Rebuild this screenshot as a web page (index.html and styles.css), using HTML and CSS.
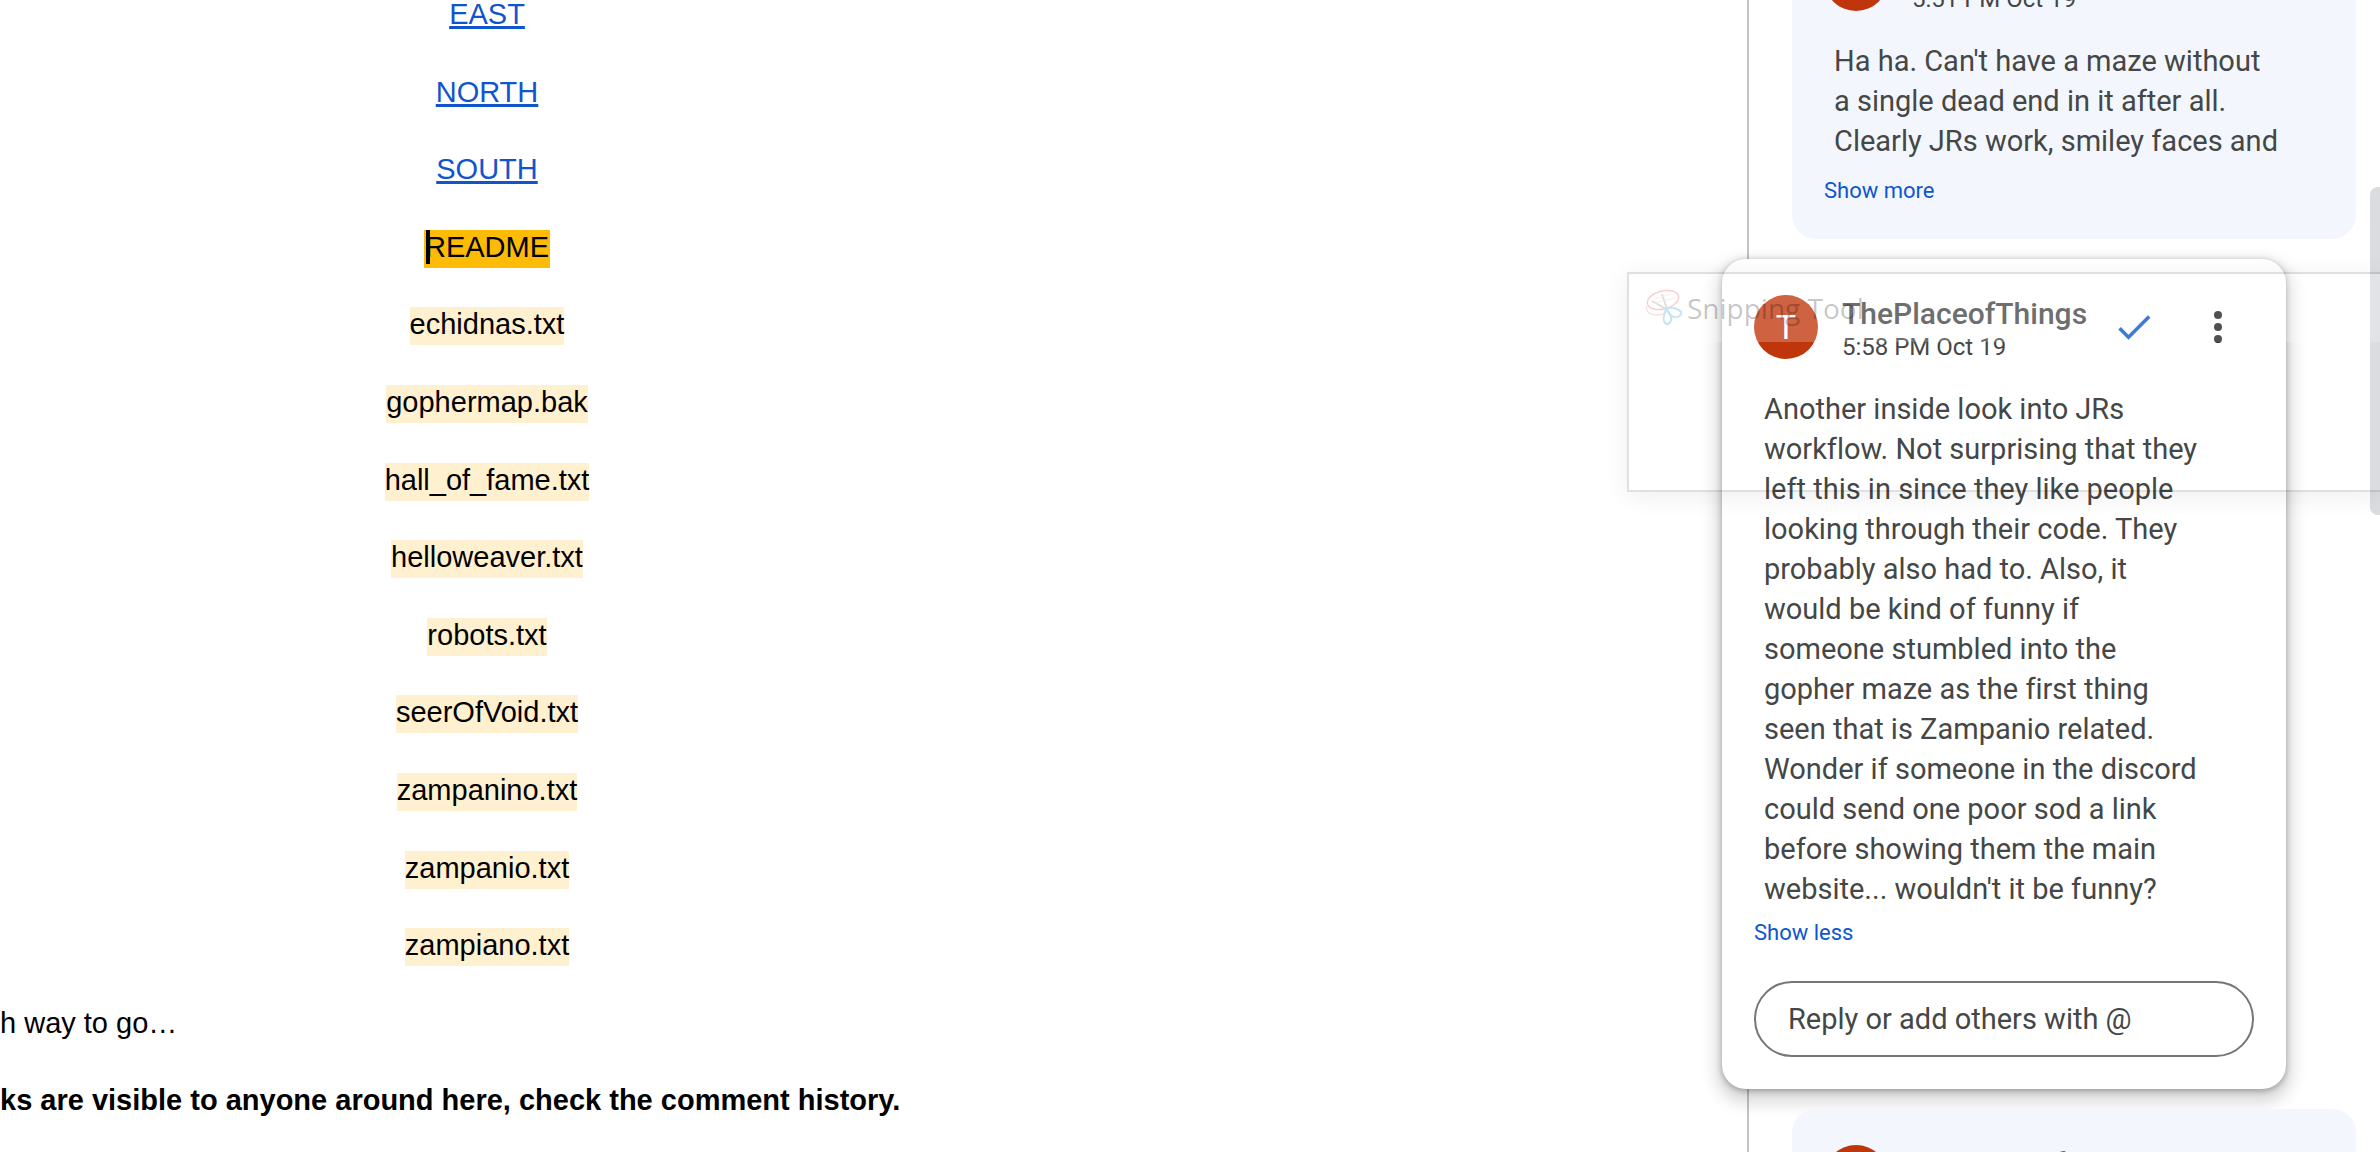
FILE: index.html
```html
<!DOCTYPE html>
<html lang="en">
	<head>
		<meta charset="UTF-8" />
		<meta name="viewport" content="width=device-width, initial-scale=1.0" />
		<title>Gopher maze - comments</title>
		<link rel="stylesheet" href="styles.css">
	</head>
	<body>
		<main class="document">
			<div class="page">
				<p><a href="#east">EAST</a></p>
				<p><a href="#north">NORTH</a></p>
				<p><a href="#south">SOUTH</a></p>
				<p><mark class="active"><span class="caret"></span>README</mark></p>
				<p><mark>echidnas.txt</mark></p>
				<p><mark>gophermap.bak</mark></p>
				<p><mark>hall_of_fame.txt</mark></p>
				<p><mark>helloweaver.txt</mark></p>
				<p><mark>robots.txt</mark></p>
				<p><mark>seerOfVoid.txt</mark></p>
				<p><mark>zampanino.txt</mark></p>
				<p><mark>zampanio.txt</mark></p>
				<p><mark>zampiano.txt</mark></p>
				<p class="left">h way to go…</p>
				<p class="left"><b>ks are visible to anyone around here, check the comment history.</b></p>
			</div>
		</main>

		<aside class="comments">
			<article class="card">
				<header>
					<span class="avatar">T</span>
					<div class="author">
						<h2>ThePlaceofThings</h2>
						<time>5:51 PM Oct 19</time>
					</div>
				</header>
				<p class="text">
					Ha ha. Can't have a maze without<br>
					a single dead end in it after all.<br>
					Clearly JRs work, smiley faces and
				</p>
				<button class="toggle more">Show more</button>
			</article>

			<article class="card selected">
				<header>
					<span class="avatar">T</span>
					<div class="author">
						<h2>ThePlaceofThings</h2>
						<time>5:58 PM Oct 19</time>
					</div>
					<div class="actions">
						<button aria-label="Mark as resolved">
							<svg class="check" viewBox="0 0 24 24"><path d="M9 16.17L4.83 12l-1.42 1.41L9 19 21 7l-1.41-1.41z" /></svg>
						</button>
						<button aria-label="More options">
							<svg class="dots" viewBox="0 0 24 24">
								<circle cx="12" cy="6" r="2" />
								<circle cx="12" cy="12" r="2" />
								<circle cx="12" cy="18" r="2" />
							</svg>
						</button>
					</div>
				</header>
				<p class="text">
					Another inside look into JRs<br>
					workflow. Not surprising that they<br>
					left this in since they like people<br>
					looking through their code. They<br>
					probably also had to. Also, it<br>
					would be kind of funny if<br>
					someone stumbled into the<br>
					gopher maze as the first thing<br>
					seen that is Zampanio related.<br>
					Wonder if someone in the discord<br>
					could send one poor sod a link<br>
					before showing them the main<br>
					website... wouldn't it be funny?
				</p>
				<button class="toggle">Show less</button>
				<input class="reply" type="text" placeholder="Reply or add others with @" aria-label="Reply">
			</article>

			<article class="card">
				<header>
					<span class="avatar">T</span>
					<div class="author">
						<h2>ThePlaceofThings</h2>
					</div>
				</header>
			</article>
		</aside>

		<div class="scrollbar"><div class="thumb"></div></div>

		<!-- window fading out on top of the page -->
		<div class="ghost">
			<div class="ghost-title">
				<svg viewBox="0 0 38 38" fill="none">
					<ellipse cx="18" cy="11" rx="16" ry="9" transform="rotate(-14 18 11)" stroke="#f9cfcf" stroke-width="1.5" />
					<path d="M2 17c-2 6 3 9 10 9 4 0 7-1 9-3" stroke="#fbe0e0" stroke-width="1.5" />
					<path d="M17 5l5 15M7 12l14 8" stroke="#dedede" stroke-width="2" />
					<path d="M10 10l16-5M10 14l20-5" stroke="#f3eded" />
					<path d="M21 20c5-3 13 0 15 3 1 4-5 7-9 4-3-2-4-5-6-7z" stroke="#c7e4f5" stroke-width="2" />
					<path d="M21 20c-2 5-4 11-1 14 3 3 7-1 6-6-1-4-3-6-5-8z" stroke="#c7e4f5" stroke-width="2" />
				</svg>
				<span>Snipping Tool</span>
			</div>
		</div>
	</body>
</html>
```

FILE: styles.css
```css
* {
	margin: 0;
	padding: 0;
	box-sizing: border-box;
}
body {
	display: grid;
	grid-template-columns: 1fr 623px 10px;
	height: 100vh;
	overflow: hidden;
	background-color: white;
	font-family: Roboto, sans-serif;
	font-variant-ligatures: none;
	color: #444746;
}
button {
	border: none;
	background: none;
	font-family: inherit;
	cursor: pointer;
}

/* document */
.document {
	overflow: hidden;

	.page {
		width: 974px;
		max-width: 100%;
		margin-top: -24px;
		font-family: "Liberation Sans", Arial, sans-serif;
		font-size: 29px;
		line-height: 2.676;
		text-align: center;
		color: black;
	}
	.left {
		text-align: left;
		white-space: nowrap;
	}
	a {
		color: #1155cc;
		text-decoration-thickness: 3px;
		text-underline-offset: 2px;
		text-decoration-skip-ink: none;
	}
	mark {
		position: relative;
		padding: 1px 0 5px;
		background-color: #fff0cf;
		color: black;
	}
	mark.active {
		padding-inline: 1px;
		background-color: #fcbc05;
	}
	.caret {
		position: absolute;
		left: 2px;
		top: 0;
		width: 4px;
		height: 34px;
		background-color: black;
	}
}

/* comments */
.comments {
	display: flex;
	flex-direction: column;
	gap: 20px;
	height: 100vh;
	padding: 0 14px 0 43px;
	border-left: 2px solid #c4c4c4;

	/* scrolled a little way down */
	.card:first-child {
		margin-top: -89px;
	}
}
.card {
	flex-shrink: 0;
	padding: 36px 32px 34px;
	border-radius: 24px;
	background-color: #f3f6fd;

	header {
		display: flex;
		align-items: center;
		height: 64px;
	}
	.avatar {
		display: grid;
		place-items: center;
		width: 64px;
		height: 64px;
		border-radius: 50%;
		background-color: #c0360c;
		font-size: 34px;
		color: white;
	}
	.author {
		flex: 1;
		align-self: flex-start;
		padding-left: 24px;

		h2 {
			font-size: 30px;
			font-weight: 500;
			line-height: 38px;
		}
		time {
			display: block;
			font-size: 24px;
			line-height: 28px;
		}
	}
	.text {
		margin-top: 30px;
		padding-left: 10px;
		font-size: 29px;
		line-height: 40px;
		white-space: nowrap;
	}
	.toggle {
		display: block;
		margin-top: 10px;
		font-size: 22px;
		line-height: 28px;
		color: #0b57d0;
	}
	.toggle.more {
		margin-top: 16px;
	}
}
.selected {
	margin-inline: -70px 70px;
	padding-bottom: 32px;
	background-color: white;
	box-shadow: 0 8px 16px 6px rgba(0, 0, 0, 0.15), 0 2px 6px rgba(0, 0, 0, 0.3);

	.actions {
		display: flex;
		gap: 12px;

		button {
			display: grid;
			place-items: center;
			width: 72px;
			height: 64px;
		}
	}
	.check {
		width: 44px;
		fill: #0b57d0;
	}
	.dots {
		width: 48px;
		fill: #1f1f1f;
	}
	.reply {
		display: block;
		width: 100%;
		height: 76px;
		margin-top: 34px;
		padding-inline: 32px;
		border: 2px solid #747775;
		border-radius: 38px;
		background: none;
		font: 29px Roboto, sans-serif;
	}
	.reply::placeholder {
		color: #444746;
	}
}

.scrollbar {
	padding-top: 187px;

	.thumb {
		height: 328px;
		border-radius: 8px 0 0 8px;
		background-color: #dadce0;
	}
}

/* faded window over everything */
.ghost {
	position: absolute;
	left: 1627px;
	right: 0;
	top: 272px;
	height: 220px;
	border: 2px solid rgba(0, 0, 0, 0.12);
	border-right: none;
	box-shadow: 0 4px 24px rgba(0, 0, 0, 0.07);
	pointer-events: none;

	.ghost-title {
		display: flex;
		align-items: center;
		gap: 4px;
		height: 68px;
		padding: 0 16px;
		background-color: rgba(255, 255, 255, 0.22);
		font-family: "Open Sans", sans-serif;
		font-size: 28px;
		color: rgba(0, 0, 0, 0.24);
	}
	svg {
		width: 38px;
	}
}
```
